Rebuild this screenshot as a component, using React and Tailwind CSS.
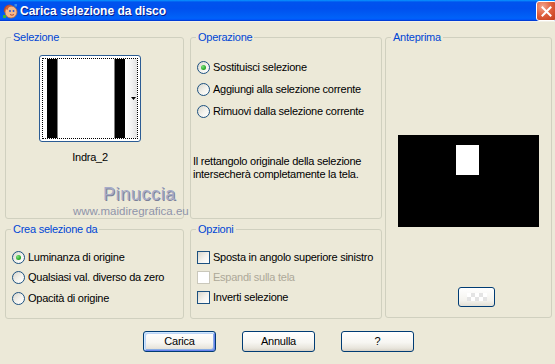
import React from "react";

function Radio({ checked }) {
  return (
    <span className="flex h-[13px] w-[13px] shrink-0 items-center justify-center rounded-full border border-[#1C5180] bg-[linear-gradient(135deg,#D8D6CC_0%,#F4F3EE_55%,#FFFFFF_100%)]">
      {checked && (
        <span className="h-[5px] w-[5px] rounded-full bg-[radial-gradient(circle_at_35%_35%,#7BE27B_0%,#21A121_70%,#108010_100%)]" />
      )}
    </span>
  );
}

function Check({ disabled }) {
  return (
    <span
      className={
        disabled
          ? "h-[13px] w-[13px] shrink-0 border border-[#CAC8BB] bg-white"
          : "h-[13px] w-[13px] shrink-0 border border-[#1C5180] bg-[linear-gradient(135deg,#D8D6CC_0%,#F4F3EE_55%,#FFFFFF_100%)]"
      }
    />
  );
}

function Row({ children, label, disabled }) {
  return (
    <div className="flex h-[14px] items-center gap-[3px] whitespace-nowrap">
      {children}
      <span className={disabled ? "leading-[13px] text-[#ACA899]" : "leading-[13px]"}>{label}</span>
    </div>
  );
}

function Group({ title, className, children }) {
  return (
    <fieldset className={"min-w-0 rounded-[3px] border border-[#D0D0BF] " + (className || "")}>
      <legend className="ml-[5px] px-[2px] leading-[13px] text-[#0046D5]">{title}</legend>
      {children}
    </fieldset>
  );
}

function XPButton({ label, def }) {
  return (
    <button
      className={
        "h-[21px] w-[73px] rounded-[3px] border border-[#003C74] bg-[linear-gradient(180deg,#FFFFFF_0%,#F7F6F2_55%,#E8E5DC_85%,#D6D0C5_100%)] text-[11px] leading-[13px] text-black " +
        (def
          ? "shadow-[inset_1px_1px_0_#CEE7FF,inset_-1px_-1px_0_#6982EE,inset_2px_2px_0_#BCD4F6,inset_-2px_-2px_0_#89ADE4]"
          : "")
      }
    >
      {label}
    </button>
  );
}

function AppIcon() {
  return (
    <svg width="16" height="16" viewBox="0 0 16 16" className="ml-[2px] shrink-0">
      <path d="M2 9 C1 4 5 1 9 1.5 C6 2.5 4 5 4.5 9 Z" fill="#B8462A" />
      <circle cx="9" cy="9" r="6" fill="#F5B98A" stroke="#C26A3A" strokeWidth="0.8" />
      <path d="M3.5 6 C4 2.5 8 1.5 11 3 C8 3 6 4.5 5.5 7 Z" fill="#D0603A" />
      <circle cx="8" cy="8" r="1" fill="#2A5BD8" />
      <circle cx="11.5" cy="8" r="1" fill="#2A5BD8" />
      <path d="M8 11.5 Q10 13 12 11.5" stroke="#B0402A" strokeWidth="0.9" fill="none" />
      <rect x="1" y="12" width="3" height="3" fill="#3BB33B" />
      <rect x="12.5" y="1" width="2.5" height="2.5" fill="#3A8EE8" />
    </svg>
  );
}

export default function App() {
  return (
    <div className="relative h-[364px] w-[555px] overflow-hidden bg-[#ECE9D8] font-['Liberation_Sans',Arial,sans-serif] text-[11px] tracking-[-0.25px] text-black">
      {/* Title bar */}
      <div className="flex h-[21px] items-center bg-[linear-gradient(180deg,#0997FF_0%,#0053EE_10%,#0050EE_40%,#0062F8_85%,#005BFF_92%,#003DD7_97%,#003DD7_100%)]">
        <AppIcon />
        <span className="ml-[2px] text-[12px] font-bold leading-[14px] tracking-normal text-white [text-shadow:1px_1px_0_#0A1B87]">
          Carica selezione da disco
        </span>
        <div className="ml-auto -mr-[2px] flex h-[20px] w-[21px] shrink-0 items-center justify-center self-end rounded-[3px] border border-white bg-[radial-gradient(circle_at_30%_25%,#F2A58C_0%,#E0603E_45%,#C13A18_100%)]">
          <svg width="11" height="11" viewBox="0 0 11 11">
            <path d="M1.5 1.5 L9.5 9.5 M9.5 1.5 L1.5 9.5" stroke="#FFFFFF" strokeWidth="2" strokeLinecap="square" />
          </svg>
        </div>
      </div>
      <div className="h-px bg-[#F3F1E8]" />

      {/* Body */}
      <div className="flex pl-[5px] pt-[9px]">
        <div className="grid grid-cols-[179px_192px] grid-rows-[188px_96px] gap-x-[6px] gap-y-[4px]">
          <Group title="Selezione">
            <div className="ml-[33px] mt-[11px] flex w-[102px] flex-col items-center">
              <div className="h-[87px] w-[102px] rounded-[3px] border border-[#2B5C94] bg-white p-[2px]">
                <div className="flex h-full border border-dotted border-black">
                  <div className="w-[4px] bg-white" />
                  <div className="w-[10px] bg-black" />
                  <div className="w-px bg-[#808080]" />
                  <div className="flex-1 bg-white" />
                  <div className="w-px bg-[#808080]" />
                  <div className="w-[10px] bg-black" />
                  <div className="flex w-[12px] items-center justify-end bg-[linear-gradient(90deg,#FFFFFF_0%,#F4F4F4_50%,#E2E2E2_100%)] pr-px">
                    <svg width="5" height="3" viewBox="0 0 5 3">
                      <path d="M0 0 H5 L2.5 3 Z" fill="#000" />
                    </svg>
                  </div>
                </div>
              </div>
              <div className="mt-[9px] leading-[13px]">Indra_2</div>
            </div>
          </Group>

          <Group title="Operazione">
            <div className="mt-[16px] flex flex-col gap-[8px] pl-[6px]">
              <Row label="Sostituisci selezione">
                <Radio checked />
              </Row>
              <Row label="Aggiungi alla selezione corrente">
                <Radio />
              </Row>
              <Row label="Rimuovi dalla selezione corrente">
                <Radio />
              </Row>
            </div>
            <p className="ml-[2px] mt-[37px] leading-[13px]">
              Il rettangolo originale della selezione
              <br />
              intersecherà completamente la tela.
            </p>
          </Group>

          <Group title="Crea selezione da">
            <div className="mt-[14px] flex flex-col gap-[6.5px] pl-[6px]">
              <Row label="Luminanza di origine">
                <Radio checked />
              </Row>
              <Row label="Qualsiasi val. diverso da zero">
                <Radio />
              </Row>
              <Row label="Opacità di origine">
                <Radio />
              </Row>
            </div>
          </Group>

          <Group title="Opzioni">
            <div className="mt-[14px] flex flex-col gap-[6px] pl-[6px]">
              <Row label="Sposta in angolo superiore sinistro">
                <Check />
              </Row>
              <Row label="Espandi sulla tela" disabled>
                <Check disabled />
              </Row>
              <Row label="Inverti selezione">
                <Check />
              </Row>
            </div>
          </Group>
        </div>

        <Group title="Anteprima" className="ml-[3px] h-[287px] w-[167px]">
          <div className="ml-[12px] mt-[91px] h-[92px] w-[141px] bg-black pl-[58px] pt-[10px]">
            <div className="h-[30px] w-[23px] bg-white" />
          </div>
          <div className="ml-[72px] mt-[60px] flex h-[20px] w-[37px] items-center justify-center rounded-[3px] border border-[#003C74] bg-[linear-gradient(180deg,#FFFFFF_0%,#F4F3EE_70%,#E3E0D6_100%)]">
            <div className="h-[8px] w-[20px] bg-[repeating-conic-gradient(#E4E4E4_0%_25%,#FFFFFF_0%_50%)] bg-[length:8px_8px]" />
          </div>
        </Group>
      </div>

      {/* Buttons */}
      <div className="mt-[12px] flex gap-[26px] pl-[143px]">
        <XPButton label="Carica" def />
        <XPButton label="Annulla" />
        <XPButton label="?" />
      </div>

      {/* Watermark overlay */}
      <div className="pointer-events-none absolute left-[103px] top-[184px] whitespace-nowrap text-[18px] leading-[20px] tracking-[0.6px] text-[#A6ABC8] [text-shadow:1px_1px_0_#7B8099]">
        Pinuccia
      </div>
      <div className="pointer-events-none absolute left-[73px] top-[205px] whitespace-nowrap text-[11.5px] leading-[13px] tracking-normal text-[#8F94AA]">
        www.maidiregrafica.eu
      </div>
    </div>
  );
}
